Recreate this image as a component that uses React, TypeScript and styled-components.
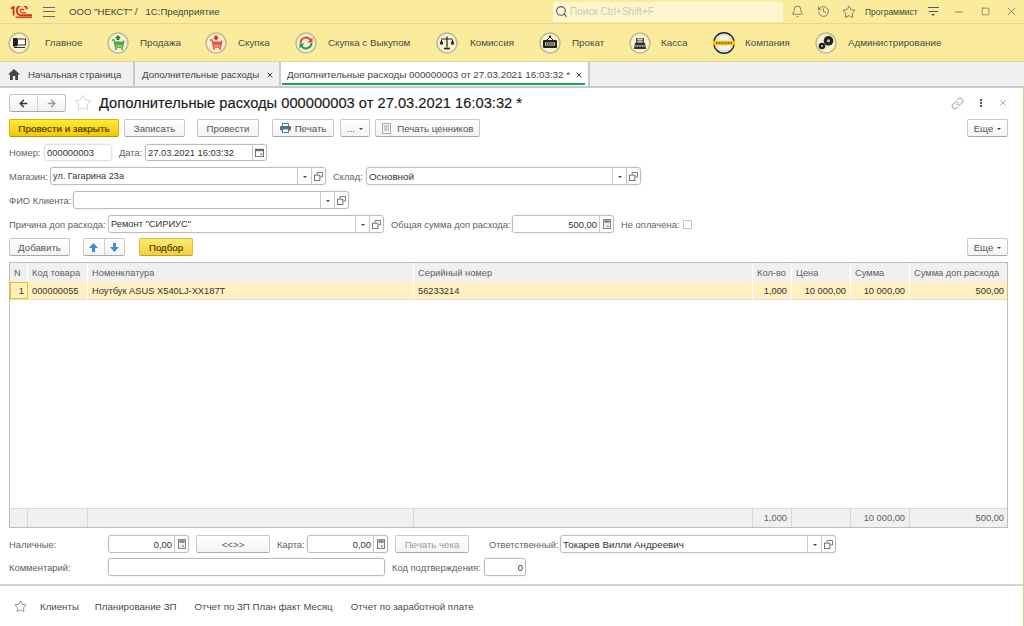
import React from 'react';
import styled, { createGlobalStyle } from 'styled-components';
import { ArrowLeft, ArrowRight, Bell, History, Star, Search, Link, X, Minus, Square } from 'lucide-react';

const GlobalStyle = createGlobalStyle`
	html, body { margin: 0; padding: 0; background: #fff; }
	* { box-sizing: border-box; }
	body { font-family: 'Liberation Sans', Arial, sans-serif; font-size: 10px; color: #4a4a4a; }
`;

const Page = styled.div`
	width: 1024px;
	height: 626px;
	display: flex;
	flex-direction: column;
	overflow: hidden;
	background: #fff;
`;

/* ---- caption ---- */
const Caption = styled.div`
	height: 24px;
	flex: none;
	display: flex;
	align-items: center;
	background: #fbeb9c;
	border-bottom: 1px solid #e6d88e;
	padding-left: 10px;
`;
const Burger = styled.div`
	width: 12px;
	height: 10px;
	margin-left: 11px;
	border-top: 1px solid #666;
	border-bottom: 1px solid #666;
	position: relative;
	&::after {
		content: '';
		position: absolute;
		left: 0;
		right: 0;
		top: 3px;
		border-top: 1px solid #666;
	}
`;
const CaptionText = styled.span<{ $ml: number }>`
	font-size: 9.6px;
	color: #444;
	margin-left: ${p => p.$ml}px;
`;
const SearchBox = styled.div`
	width: 230px;
	height: 20px;
	margin-left: auto;
	margin-right: 1px;
	background: #fdf6cf;
	border-radius: 2px;
	display: flex;
	align-items: center;
	gap: 2px;
	padding-left: 2px;
	color: #cdc9ae;
	font-size: 10px;
	svg { color: #555; }
`;
const CaptionIcon = styled.div`
	width: 26px;
	display: flex;
	justify-content: center;
	color: #555;
`;
const UserName = styled.span`
	font-size: 8.5px;
	color: #444;
	margin-left: 3px;
	width: 59px;
`;
const CaptionMenu = styled.div`
	width: 11px;
	height: 10px;
	margin-left: 4px;
	margin-right: 7px;
	border-top: 1px solid #555;
	position: relative;
	&::before {
		content: '';
		position: absolute;
		left: 1px;
		right: 1px;
		top: 3px;
		border-top: 1px solid #555;
	}
	&::after {
		content: '';
		position: absolute;
		left: 3px;
		top: 6px;
		border: 2.5px solid transparent;
		border-top-color: #555;
	}
`;

/* ---- sections ---- */
const SectionBar = styled.div`
	height: 38px;
	flex: none;
	display: flex;
	align-items: center;
	background: #fbeb9c;
	border-bottom: 1px solid #e6d88e;
	padding-left: 8px;
`;
const SectionItem = styled.div<{ $w: number; $gap: number }>`
	display: flex;
	align-items: center;
	gap: ${p => p.$gap}px;
	width: ${p => p.$w}px;
	flex: none;
	font-size: 9.8px;
	color: #4a4a4a;
	white-space: nowrap;
`;
const IconRound = styled.svg`
	flex: none;
	width: 22px;
	height: 22px;
`;

const Ring: React.FC<{ children?: React.ReactNode }> = ({ children }) => (
	<IconRound viewBox="0 0 22 22">
		<circle cx="11" cy="11" r="10" fill="#f8f2cf" stroke="#c2b98f" strokeWidth="1.5" />
		{children}
	</IconRound>
);

const CartIcon: React.FC<{ color: string; down?: boolean }> = ({ color, down }) => (
	<Ring>
		<path d="M5 8h2l1.5 7h7L17 8.5" fill="none" stroke={color} strokeWidth="1.4" />
		<path d="M7.5 9.5h9l-1 4h-7z" fill={color} />
		<circle cx="9" cy="17" r="1.1" fill={color} />
		<circle cx="15" cy="17" r="1.1" fill={color} />
		<path d={down ? 'M9.5 3.5h3v2h1.5L11 8.5 8 5.5h1.5z' : 'M11 3l3 3h-1.5v2h-3V6H8z'} fill={down ? '#d93025' : '#1a8a3a'} />
	</Ring>
);

const HomeDeskIcon = () => (
	<Ring>
		<rect x="5" y="6" width="4" height="8.5" fill="#222" />
		<rect x="9.5" y="7" width="8" height="6" fill="#fff" stroke="#333" strokeWidth="1" />
		<path d="M6 15.5h11" stroke="#333" strokeWidth="1" />
	</Ring>
);

const SwapIcon = () => (
	<Ring>
		<path d="M5.5 11A5.5 5.5 0 0 1 15.5 8" fill="none" stroke="#e04030" strokeWidth="2" />
		<path d="M17.5 5.5v5h-5z" fill="#e04030" />
		<path d="M16.5 11A5.5 5.5 0 0 1 6.5 14" fill="none" stroke="#1a9a4a" strokeWidth="2" />
		<path d="M4.5 16.5v-5h5z" fill="#1a9a4a" />
	</Ring>
);

const ScalesIcon = () => (
	<Ring>
		<path d="M11 4.5v11M5.5 7h11" stroke="#222" strokeWidth="1.2" />
		<path d="M8 16.5h6" stroke="#222" strokeWidth="1.6" />
		<path d="M3.8 11.5L5.5 7l1.7 4.5a1.8 1.8 0 0 1-3.4 0zM14.8 11.5L16.5 7l1.7 4.5a1.8 1.8 0 0 1-3.4 0z" fill="#222" />
	</Ring>
);

const RentIcon = () => (
	<Ring>
		<path d="M8 8l3-3 3 3" fill="none" stroke="#222" strokeWidth="1" />
		<circle cx="11" cy="4.8" r="1.2" fill="#222" />
		<rect x="4" y="8" width="14" height="8" rx="1" fill="#222" />
		<path d="M6 10.5h10v3H6z" fill="#d8d2b0" />
		<path d="M7 12h8" stroke="#222" strokeWidth="1.4" strokeDasharray="1.5 .6" />
	</Ring>
);

const CashIcon = () => (
	<Ring>
		<path d="M5 17l1-6h10l1 6z" fill="#333" />
		<path d="M7 11V6h8v5z" fill="#55524a" />
		<path d="M8 7.5h6M8 9.5h6M10 5v6M12 5v6" stroke="#f0ead0" strokeWidth=".7" />
		<path d="M6 14h10" stroke="#d8d2b0" strokeWidth="1" />
	</Ring>
);

const CompanyIcon = () => (
	<IconRound viewBox="0 0 22 22">
		<circle cx="11" cy="11" r="10.2" fill="#f4f4f0" stroke="#222" strokeWidth="1.4" />
		<circle cx="11" cy="11" r="8" fill="none" stroke="#999" strokeWidth=".8" strokeDasharray="1 1" />
		<rect x="0" y="8.7" width="22" height="4.6" fill="#f2c200" />
		<path d="M3 11h16" stroke="#333" strokeWidth="1.2" strokeDasharray="1 .5" />
	</IconRound>
);

const GearsIcon = () => (
	<Ring>
		<circle cx="13.5" cy="8.8" r="4.8" fill="#222" />
		<circle cx="13.5" cy="8.8" r="1.5" fill="#d8d2b0" />
		<circle cx="7" cy="14" r="3.3" fill="#222" />
		<circle cx="7" cy="14" r="1" fill="#d8d2b0" />
	</Ring>
);

/* ---- open windows ---- */
const TabBar = styled.div`
	height: 26px;
	flex: none;
	display: flex;
	background: #f0f0f0;
	border-bottom: 2px solid #c9c9c9;
`;
const Tab = styled.div<{ $w: number; $pl: number; $active?: boolean }>`
	display: flex;
	align-items: center;
	width: ${p => p.$w}px;
	flex: none;
	padding-left: ${p => p.$pl}px;
	font-size: ${p => (p.$active ? 9.84 : 9.66)}px;
	color: #444;
	white-space: nowrap;
	position: relative;
	background: ${p => (p.$active ? '#fff' : 'transparent')};
	border-right: 2px solid #c9c9c9;
	&::after {
		content: '';
		display: ${p => (p.$active ? 'block' : 'none')};
		position: absolute;
		left: 1px;
		right: 3px;
		bottom: 1px;
		height: 2px;
		background: #1fa35a;
	}
`;
const TabClose = styled(X)`
	position: absolute;
	right: 5px;
	top: 9px;
	color: #444;
`;
const HomeGlyph = styled.svg`
	margin-right: 8px;
`;

/* ---- form ---- */
const Form = styled.div`
	flex: 1;
	display: flex;
	flex-direction: column;
	padding: 6px 15px 0 9px;
	border-right: 1px solid #d8cc8e;
	min-height: 0;
`;
const TitleRow = styled.div`
	height: 18px;
	display: flex;
	align-items: center;
`;
const NavGroup = styled.div`
	width: 57px;
	height: 18px;
	display: flex;
	border: 1px solid #c4c4c4;
	border-bottom-color: #a8a8a8;
	border-radius: 3px;
	background: linear-gradient(#fff, #f1f1f1);
`;
const NavPart = styled.div<{ $dim?: boolean }>`
	flex: 1;
	height: 100%;
	display: flex;
	align-items: center;
	justify-content: center;
	color: ${p => (p.$dim ? '#9a9a9a' : '#333')};
	& + & { border-left: 1px solid #d0d0d0; }
`;
const TitleStar = styled(Star)`
	margin-left: 8px;
	flex: none;
`;
const Title = styled.h1`
	margin: 0 0 0 7px;
	font-size: 14.7px;
	font-weight: 400;
	color: #1a1a1a;
	white-space: nowrap;
	-webkit-text-stroke: 0.15px #1a1a1a;
`;
const FormTools = styled.div`
	margin-left: auto;
	display: flex;
	align-items: center;
	gap: 13px;
	color: #666;
`;
const Dots = styled.div`
	width: 2px;
	height: 8px;
	background: radial-gradient(circle at 1px 1px, #555 1px, transparent 1.2px) 0 0 / 2px 3px;
	margin: 0 3px;
`;

const Row = styled.div<{ $mt: number; $h?: number }>`
	height: ${p => p.$h || 18}px;
	display: flex;
	align-items: center;
	margin-top: ${p => p.$mt}px;
	flex: none;
`;
const Btn = styled.div<{ $w: number; $ml?: number; $primary?: boolean; $accent?: boolean; $off?: boolean; $push?: boolean }>`
	height: 18px;
	width: ${p => p.$w}px;
	margin-left: ${p => (p.$push ? 'auto' : `${p.$ml || 0}px`)};
	flex: none;
	display: flex;
	align-items: center;
	justify-content: center;
	gap: 4px;
	font-size: ${p => (p.$primary ? 9.9 : 9.7)}px;
	white-space: nowrap;
	border-radius: 2px;
	border: 1px solid ${p => (p.$primary ? '#d8b400' : p.$accent ? '#d9bd3c' : '#c8c8c8')};
	border-bottom-color: ${p => (p.$primary ? '#b49500' : p.$accent ? '#bda430' : '#a9a9a9')};
	color: ${p => (p.$off ? '#9c9c9c' : p.$primary || p.$accent ? '#4a3f00' : '#555')};
	-webkit-text-stroke: ${p => (p.$primary || p.$accent ? '0.2px #4a3f00' : '0')};
	background: ${p =>
		p.$primary
			? 'linear-gradient(#ffe93b, #f6c900)'
			: p.$accent
				? 'linear-gradient(#fde974, #f5cf3f)'
				: 'linear-gradient(#fff, #f3f3f3)'};
`;
const ArrowsBtn = styled(Btn)`
	gap: 0;
`;
const Caret = styled.span`
	width: 0;
	height: 0;
	border: 2.5px solid transparent;
	border-top-color: #444;
	margin-top: 3px;
	flex: none;
`;
const Label = styled.span<{ $w?: number; $ml?: number }>`
	font-size: 9.4px;
	color: #5f5f5f;
	white-space: nowrap;
	width: ${p => (p.$w ? `${p.$w}px` : 'auto')};
	margin-left: ${p => p.$ml || 0}px;
	flex: none;
`;
const Field = styled.div<{ $w: number; $ml?: number; $soft?: boolean }>`
	height: 100%;
	width: ${p => p.$w}px;
	margin-left: ${p => p.$ml || 0}px;
	flex: none;
	display: flex;
	align-items: center;
	background: #fff;
	border: 1px solid ${p => (p.$soft ? '#e2e2e2' : '#bcbcbc')};
	border-radius: 3px;
	box-shadow: 0 0 0 1px rgba(0, 0, 0, 0.035);
	color: #333;
`;
const FieldValue = styled.span<{ $right?: boolean; $fs?: number }>`
	flex: 1;
	padding: 0 2px;
	font-size: ${p => p.$fs || 9.4}px;
	text-align: ${p => (p.$right ? 'right' : 'left')};
	white-space: nowrap;
	overflow: hidden;
`;
const FieldBtn = styled.span`
	width: 14px;
	height: 100%;
	flex: none;
	display: flex;
	align-items: center;
	justify-content: center;
	border-left: 1px solid #c8c8c8;
	color: #555;
`;
const Check = styled.span`
	width: 9px;
	height: 9px;
	margin-left: 4px;
	border: 1px solid #c4c4c4;
	background: #fff;
	flex: none;
`;

const OpenIcon = () => (
	<svg width="9" height="9" viewBox="0 0 10 10" fill="none" stroke="#666" strokeWidth="1">
		<path d="M3.5 3V.5h6v5H7" />
		<rect x=".5" y="3.5" width="6" height="6" />
	</svg>
);
const CalendarIcon = () => (
	<svg width="9" height="9" viewBox="0 0 10 10">
		<rect x=".5" y="1.5" width="9" height="8" fill="#fff" stroke="#666" />
		<rect x="0" y="1" width="10" height="2.5" fill="#666" />
		<rect x="6" y="6" width="2" height="2" fill="#888" />
	</svg>
);
const CalcIcon = () => (
	<svg width="8" height="10" viewBox="0 0 9 11">
		<rect x=".5" y=".5" width="8" height="10" fill="#eee" stroke="#777" />
		<rect x="1.5" y="1.5" width="6" height="2.5" fill="#777" />
		<rect x="4.5" y="7" width="2" height="2" fill="#999" />
	</svg>
);
const PrintIcon = () => (
	<svg width="11" height="10" viewBox="0 0 11 10">
		<rect x="2.5" y=".5" width="6" height="3" fill="#fff" stroke="#5b7b9b" />
		<rect x="0" y="3" width="11" height="4.5" rx="1" fill="#4a7396" />
		<rect x="2.5" y="6" width="6" height="3.5" fill="#fff" stroke="#5b7b9b" />
	</svg>
);
const SheetIcon = () => (
	<svg width="9" height="11" viewBox="0 0 9 11" fill="none" stroke="#aaa">
		<rect x=".5" y=".5" width="8" height="10" fill="#f4f4f4" />
		<path d="M2 3h5M2 5h5M2 7h5" />
	</svg>
);
const ArrowIcon: React.FC<{ down?: boolean }> = ({ down }) => (
	<svg width="9" height="9" viewBox="0 0 9 9">
		<path d={down ? 'M3 0h3v4h3L4.5 9 0 4h3z' : 'M3 9h3V5h3L4.5 0 0 5h3z'} fill="#3d8fd0" />
	</svg>
);

const Lookup: React.FC<{ w: number; value?: string; fs?: number }> = ({ w, value, fs }) => (
	<Field $w={w}>
		<FieldValue $fs={fs}>{value}</FieldValue>
		<FieldBtn><Caret /></FieldBtn>
		<FieldBtn><OpenIcon /></FieldBtn>
	</Field>
);

/* ---- table ---- */
const Table = styled.div`
	flex: none;
	height: 266px;
	margin-top: 6px;
	border: 1px solid #bdbdbd;
	display: flex;
	flex-direction: column;
`;
const Grid = styled.div<{ $h: number; $bg: string; $line?: boolean; $top?: boolean }>`
	display: grid;
	grid-template-columns: 18px 60px 326px 339px 39px 59px 59px 1fr;
	flex: none;
	height: ${p => p.$h}px;
	background: ${p => p.$bg};
	border-bottom: ${p => (p.$line ? '1px solid #dedede' : 'none')};
	border-top: ${p => (p.$top ? '1px solid #d8d8d8' : 'none')};
`;
const Cell = styled.div<{ $right?: boolean; $head?: boolean; $sep?: string }>`
	display: flex;
	align-items: center;
	justify-content: ${p => (p.$right ? 'flex-end' : 'flex-start')};
	padding: 0 4px;
	font-size: 9.3px;
	white-space: nowrap;
	overflow: hidden;
	color: ${p => (p.$head ? '#5f5f5f' : '#333')};
	border-right: 1px solid ${p => p.$sep || '#fff'};
	&:last-child { border-right: none; padding-right: 3px; }
`;
const NumCell = styled(Cell)`
	border: 1px solid #f2c200;
	background: #fff0bd;
	justify-content: flex-end;
	padding-right: 3px;
`;
const TableBody = styled.div`
	flex: 1;
`;

/* ---- favorites ---- */
const Divider = styled.div`
	height: 2px;
	margin: 8px -15px 0 -9px;
	background: #d4d4d4;
	flex: none;
`;
const Favorites = styled.div`
	flex: 1;
	display: flex;
	align-items: center;
	padding: 0 0 0 5px;
	font-size: 9.7px;
	color: #4a4a4a;
`;
const FavLink = styled.span<{ $ml: number }>`
	margin-left: ${p => p.$ml}px;
	white-space: nowrap;
`;

const sections = [
	{ label: 'Главное', w: 99, gap: 15, icon: <HomeDeskIcon /> },
	{ label: 'Продажа', w: 98, gap: 11, icon: <CartIcon color="#4aa84a" /> },
	{ label: 'Скупка', w: 90, gap: 11, icon: <CartIcon color="#e2574c" down /> },
	{ label: 'Скупка с Выкупом', w: 141, gap: 11, icon: <SwapIcon /> },
	{ label: 'Комиссия', w: 103, gap: 12, icon: <ScalesIcon /> },
	{ label: 'Прокат', w: 90, gap: 11, icon: <RentIcon /> },
	{ label: 'Касса', w: 84, gap: 10, icon: <CashIcon /> },
	{ label: 'Компания', w: 102, gap: 10, icon: <CompanyIcon /> },
	{ label: 'Администрирование', w: 140, gap: 11, icon: <GearsIcon /> },
];

const head = ['N', 'Код товара', 'Номенклатура', 'Серийный номер', 'Кол-во', 'Цена', 'Сумма', 'Сумма доп.расхода'];

export default function App() {
	return (
		<Page>
			<GlobalStyle />
			<Caption>
				<svg width="22" height="12" viewBox="0 0 22 12" fill="none" stroke="#d9301f" strokeWidth="1.9">
					<path d="M.8 2.8L3.6 1v8.5" />
					<path d="M17 3.2A4 4 0 0 0 7 5.2a4 4 0 0 0 4 4h11" />
					<path d="M14 4.6A1.8 1.8 0 0 0 10.4 5.2a1.8 1.8 0 0 0 1.8 1.6h4" strokeWidth="1.2" />
					<path d="M5.5 11.2H22" strokeWidth="1.4" />
				</svg>
				<Burger />
				<CaptionText $ml={14}>ООО "НЕКСТ" /</CaptionText>
				<CaptionText $ml={8}>1С:Предприятие</CaptionText>
				<SearchBox><Search size={13} />Поиск Ctrl+Shift+F</SearchBox>
				<CaptionIcon><Bell size={13} strokeWidth={1.3} /></CaptionIcon>
				<CaptionIcon><History size={13} strokeWidth={1.3} /></CaptionIcon>
				<CaptionIcon><Star size={14} strokeWidth={1.3} /></CaptionIcon>
				<UserName>Программист</UserName>
				<CaptionMenu />
				<CaptionIcon><Minus size={12} strokeWidth={1.3} /></CaptionIcon>
				<CaptionIcon><Square size={9} strokeWidth={1.5} /></CaptionIcon>
				<CaptionIcon><X size={13} strokeWidth={1.2} /></CaptionIcon>
			</Caption>
			<SectionBar>
				{sections.map(s => (
					<SectionItem key={s.label} $w={s.w} $gap={s.gap}>{s.icon}{s.label}</SectionItem>
				))}
			</SectionBar>
			<TabBar>
				<Tab $w={135} $pl={8}>
					<HomeGlyph width="12" height="11" viewBox="0 0 12 11"><path d="M6 0l6 5.5h-2V11H7.2V7H4.8v4H2V5.5H0z" fill="#444" /></HomeGlyph>
					Начальная страница
				</Tab>
				<Tab $w={146} $pl={7}>
					Дополнительные расходы
					<TabClose size={8} strokeWidth={3} />
				</Tab>
				<Tab $w={309} $pl={6} $active>
					Дополнительные расходы 000000003 от 27.03.2021 16:03:32 *
					<TabClose size={8} strokeWidth={3} />
				</Tab>
			</TabBar>
			<Form>
				<TitleRow>
					<NavGroup>
						<NavPart><ArrowLeft size={11} strokeWidth={3} /></NavPart>
						<NavPart $dim><ArrowRight size={11} strokeWidth={3} /></NavPart>
					</NavGroup>
					<TitleStar size={18} strokeWidth={1} color="#c4c4c4" />
					<Title>Дополнительные расходы 000000003 от 27.03.2021 16:03:32 *</Title>
					<FormTools>
						<Link size={13} strokeWidth={1.2} />
						<Dots />
						<X size={10} strokeWidth={1.4} />
					</FormTools>
				</TitleRow>
				<Row $mt={7}>
					<Btn $w={110} $primary>Провести и закрыть</Btn>
					<Btn $w={61} $ml={5}>Записать</Btn>
					<Btn $w={62} $ml={12}>Провести</Btn>
					<Btn $w={62} $ml={13}><PrintIcon />Печать</Btn>
					<Btn $w={30} $ml={6}>...<Caret /></Btn>
					<Btn $w={105} $ml={5}><SheetIcon />&nbsp;Печать ценников</Btn>
					<Btn $w={41} $push>Еще<Caret /></Btn>
				</Row>
				<Row $mt={7} $h={17}>
					<Label $w={35}>Номер:</Label>
					<Field $w={68} $soft><FieldValue>000000003</FieldValue></Field>
					<Label $ml={7} $w={26}>Дата:</Label>
					<Field $w={122}>
						<FieldValue>27.03.2021 16:03:32</FieldValue>
						<FieldBtn><CalendarIcon /></FieldBtn>
					</Field>
				</Row>
				<Row $mt={6}>
					<Label $w={41}>Магазин:</Label>
					<Lookup w={276} value="ул. Гагарина 23а" fs={9.2} />
					<Label $ml={7} $w={33}>Склад:</Label>
					<Lookup w={275} value="Основной" fs={9.8} />
				</Row>
				<Row $mt={6}>
					<Label $w={64}>ФИО Клиента:</Label>
					<Lookup w={276} />
				</Row>
				<Row $mt={6}>
					<Label $w={99}>Причина доп расхода:</Label>
					<Lookup w={276} value='Ремонт "СИРИУС"' fs={9.3} />
					<Label $ml={7} $w={121}>Общая сумма доп расхода:</Label>
					<Field $w={102}>
						<FieldValue $right>500,00</FieldValue>
						<FieldBtn><CalcIcon /></FieldBtn>
					</Field>
					<Label $ml={7}>Не оплачена:</Label>
					<Check />
				</Row>
				<Row $mt={5}>
					<Btn $w={61}>Добавить</Btn>
					<ArrowsBtn $w={42} $ml={13}>
						<NavPart><ArrowIcon /></NavPart>
						<NavPart><ArrowIcon down /></NavPart>
					</ArrowsBtn>
					<Btn $w={54} $ml={14} $accent>Подбор</Btn>
					<Btn $w={41} $push>Еще<Caret /></Btn>
				</Row>
				<Table>
					<Grid $h={19} $bg="#f0f0f0">
						{head.map(h => <Cell key={h} $head>{h}</Cell>)}
					</Grid>
					<Grid $h={18} $bg="#fff0c2" $line>
						<NumCell>1</NumCell>
						<Cell>000000055</Cell>
						<Cell>Ноутбук ASUS X540LJ-XX187T</Cell>
						<Cell>56233214</Cell>
						<Cell $right>1,000</Cell>
						<Cell $right>10 000,00</Cell>
						<Cell $right>10 000,00</Cell>
						<Cell $right>500,00</Cell>
					</Grid>
					<TableBody />
					<Grid $h={19} $bg="#f0f0f0" $top>
						<Cell $sep="#d8d8d8" />
						<Cell $sep="#d8d8d8" />
						<Cell $sep="#d8d8d8" />
						<Cell $sep="#d8d8d8" />
						<Cell $right $head $sep="#d8d8d8">1,000</Cell>
						<Cell $sep="#d8d8d8" />
						<Cell $right $head $sep="#d8d8d8">10 000,00</Cell>
						<Cell $right $head>500,00</Cell>
					</Grid>
				</Table>
				<Row $mt={7}>
					<Label $w={99}>Наличные:</Label>
					<Field $w={81}>
						<FieldValue $right>0,00</FieldValue>
						<FieldBtn><CalcIcon /></FieldBtn>
					</Field>
					<Btn $w={74} $ml={7}>&lt;&lt;&gt;&gt;</Btn>
					<Label $ml={7} $w={30}>Карта:</Label>
					<Field $w={81}>
						<FieldValue $right>0,00</FieldValue>
						<FieldBtn><CalcIcon /></FieldBtn>
					</Field>
					<Btn $w={74} $ml={7} $off>Печать чека</Btn>
					<Label $ml={20} $w={71}>Ответственный:</Label>
					<Lookup w={276} value="Токарев Вилли Андреевич" fs={9.8} />
				</Row>
				<Row $mt={5}>
					<Label $w={99}>Комментарий:</Label>
					<Field $w={277} />
					<Label $ml={7} $w={92}>Код подтверждения:</Label>
					<Field $w={42}><FieldValue $right>0</FieldValue></Field>
				</Row>
				<Divider />
				<Favorites>
					<Star size={13} strokeWidth={1.2} color="#555" />
					<FavLink $ml={13}>Клиенты</FavLink>
					<FavLink $ml={16}>Планирование ЗП</FavLink>
					<FavLink $ml={18}>Отчет по ЗП План факт Месяц</FavLink>
					<FavLink $ml={18}>Отчет по заработной плате</FavLink>
				</Favorites>
			</Form>
		</Page>
	);
}
